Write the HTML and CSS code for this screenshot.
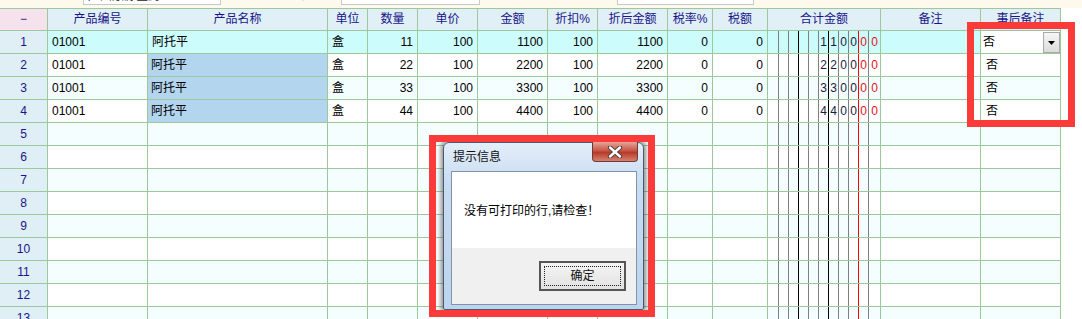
FILE: index.html
```html
<!DOCTYPE html>
<html lang="zh-CN">
<head>
  <meta charset="UTF-8" />
  <title>销售单</title>
  <link rel="stylesheet" href="styles.css">
</head>
<body>
  <div class="toolbar">
    <div class="bar-inner">
      <span class="lbl w83">客户名称</span>
      <span class="field w138">广州康源医药</span>
      <span class="lbl w120">单据编号</span>
      <span class="field w139">XS2016</span>
      <span class="lbl w137">制单日期</span>
      <span class="field w137">2016-06</span>
      <span class="lbl blue w116">合计金额</span>
      <span class="lbl blue w98">元</span>
    </div>
  </div>

  <div class="grid">
    <div class="row head">
      <div class="c corner">−</div>
      <div class="c">产品编号</div>
      <div class="c">产品名称</div>
      <div class="c">单位</div>
      <div class="c">数量</div>
      <div class="c">单价</div>
      <div class="c">金额</div>
      <div class="c">折扣%</div>
      <div class="c">折后金额</div>
      <div class="c">税率%</div>
      <div class="c">税额</div>
      <div class="c">合计金额</div>
      <div class="c">备注</div>
      <div class="c">事后备注</div>
    </div>

    <div class="row sel">
      <div class="c no">1</div>
      <div class="c">01001</div>
      <div class="c">阿托平</div>
      <div class="c">盒</div>
      <div class="c r">11</div>
      <div class="c r">100</div>
      <div class="c r">1100</div>
      <div class="c r">100</div>
      <div class="c r">1100</div>
      <div class="c r">0</div>
      <div class="c r">0</div>
      <div class="c sum"><i></i><i></i><i></i><i></i><i></i><i>1</i><i>1</i><i>0</i><i>0</i><i class="red">0</i><i class="red">0</i></div>
      <div class="c"></div>
      <div class="c combo"><span class="combo-text">否</span><span class="combo-btn"><svg width="7" height="4" viewBox="0 0 7 4"><path d="M0 0h7L3.5 4z" fill="#000"/></svg></span></div>
    </div>

    <div class="row">
      <div class="c no">2</div>
      <div class="c">01001</div>
      <div class="c pick">阿托平</div>
      <div class="c">盒</div>
      <div class="c r">22</div>
      <div class="c r">100</div>
      <div class="c r">2200</div>
      <div class="c r">100</div>
      <div class="c r">2200</div>
      <div class="c r">0</div>
      <div class="c r">0</div>
      <div class="c sum"><i></i><i></i><i></i><i></i><i></i><i>2</i><i>2</i><i>0</i><i>0</i><i class="red">0</i><i class="red">0</i></div>
      <div class="c"></div>
      <div class="c note">否</div>
    </div>

    <div class="row odd">
      <div class="c no">3</div>
      <div class="c">01001</div>
      <div class="c pick">阿托平</div>
      <div class="c">盒</div>
      <div class="c r">33</div>
      <div class="c r">100</div>
      <div class="c r">3300</div>
      <div class="c r">100</div>
      <div class="c r">3300</div>
      <div class="c r">0</div>
      <div class="c r">0</div>
      <div class="c sum"><i></i><i></i><i></i><i></i><i></i><i>3</i><i>3</i><i>0</i><i>0</i><i class="red">0</i><i class="red">0</i></div>
      <div class="c"></div>
      <div class="c note">否</div>
    </div>

    <div class="row">
      <div class="c no">4</div>
      <div class="c">01001</div>
      <div class="c pick">阿托平</div>
      <div class="c">盒</div>
      <div class="c r">44</div>
      <div class="c r">100</div>
      <div class="c r">4400</div>
      <div class="c r">100</div>
      <div class="c r">4400</div>
      <div class="c r">0</div>
      <div class="c r">0</div>
      <div class="c sum"><i></i><i></i><i></i><i></i><i></i><i>4</i><i>4</i><i>0</i><i>0</i><i class="red">0</i><i class="red">0</i></div>
      <div class="c"></div>
      <div class="c note">否</div>
    </div>

    <div class="row odd"><div class="c no">5</div><div class="c"></div><div class="c"></div><div class="c"></div><div class="c"></div><div class="c"></div><div class="c"></div><div class="c"></div><div class="c"></div><div class="c"></div><div class="c"></div><div class="c sum"><i></i><i></i><i></i><i></i><i></i><i></i><i></i><i></i><i></i><i></i><i></i></div><div class="c"></div><div class="c"></div></div>
    <div class="row"><div class="c no">6</div><div class="c"></div><div class="c"></div><div class="c"></div><div class="c"></div><div class="c"></div><div class="c"></div><div class="c"></div><div class="c"></div><div class="c"></div><div class="c"></div><div class="c sum"><i></i><i></i><i></i><i></i><i></i><i></i><i></i><i></i><i></i><i></i><i></i></div><div class="c"></div><div class="c"></div></div>
    <div class="row odd"><div class="c no">7</div><div class="c"></div><div class="c"></div><div class="c"></div><div class="c"></div><div class="c"></div><div class="c"></div><div class="c"></div><div class="c"></div><div class="c"></div><div class="c"></div><div class="c sum"><i></i><i></i><i></i><i></i><i></i><i></i><i></i><i></i><i></i><i></i><i></i></div><div class="c"></div><div class="c"></div></div>
    <div class="row"><div class="c no">8</div><div class="c"></div><div class="c"></div><div class="c"></div><div class="c"></div><div class="c"></div><div class="c"></div><div class="c"></div><div class="c"></div><div class="c"></div><div class="c"></div><div class="c sum"><i></i><i></i><i></i><i></i><i></i><i></i><i></i><i></i><i></i><i></i><i></i></div><div class="c"></div><div class="c"></div></div>
    <div class="row odd"><div class="c no">9</div><div class="c"></div><div class="c"></div><div class="c"></div><div class="c"></div><div class="c"></div><div class="c"></div><div class="c"></div><div class="c"></div><div class="c"></div><div class="c"></div><div class="c sum"><i></i><i></i><i></i><i></i><i></i><i></i><i></i><i></i><i></i><i></i><i></i></div><div class="c"></div><div class="c"></div></div>
    <div class="row"><div class="c no">10</div><div class="c"></div><div class="c"></div><div class="c"></div><div class="c"></div><div class="c"></div><div class="c"></div><div class="c"></div><div class="c"></div><div class="c"></div><div class="c"></div><div class="c sum"><i></i><i></i><i></i><i></i><i></i><i></i><i></i><i></i><i></i><i></i><i></i></div><div class="c"></div><div class="c"></div></div>
    <div class="row odd"><div class="c no">11</div><div class="c"></div><div class="c"></div><div class="c"></div><div class="c"></div><div class="c"></div><div class="c"></div><div class="c"></div><div class="c"></div><div class="c"></div><div class="c"></div><div class="c sum"><i></i><i></i><i></i><i></i><i></i><i></i><i></i><i></i><i></i><i></i><i></i></div><div class="c"></div><div class="c"></div></div>
    <div class="row"><div class="c no">12</div><div class="c"></div><div class="c"></div><div class="c"></div><div class="c"></div><div class="c"></div><div class="c"></div><div class="c"></div><div class="c"></div><div class="c"></div><div class="c"></div><div class="c sum"><i></i><i></i><i></i><i></i><i></i><i></i><i></i><i></i><i></i><i></i><i></i></div><div class="c"></div><div class="c"></div></div>
    <div class="row odd"><div class="c no">13</div><div class="c"></div><div class="c"></div><div class="c"></div><div class="c"></div><div class="c"></div><div class="c"></div><div class="c"></div><div class="c"></div><div class="c"></div><div class="c"></div><div class="c sum"><i></i><i></i><i></i><i></i><i></i><i></i><i></i><i></i><i></i><i></i><i></i></div><div class="c"></div><div class="c"></div></div>
  </div>

  <!-- message box over the grid -->
  <div class="mark mark-dialog"></div>
  <div class="dialog">
    <div class="dialog-title">提示信息</div>
    <div class="dialog-close">
      <svg width="16" height="12" viewBox="0 0 16 12">
        <path d="M3 1.5l10 9M13 1.5l-10 9" stroke="#3a3a3a" stroke-width="4.2" stroke-linecap="round"/>
        <path d="M3 1.5l10 9M13 1.5l-10 9" stroke="#fff" stroke-width="2.4" stroke-linecap="round"/>
      </svg>
    </div>
    <div class="dialog-body">
      <div class="dialog-msg">没有可打印的行,请检查！</div>
      <div class="dialog-foot">
        <div class="btn"><span class="btn-focus">确定</span></div>
      </div>
    </div>
  </div>

  <div class="mark mark-note"></div>
</body>
</html>
```

FILE: styles.css
```css
body {
  margin: 0;
  width: 1082px;
  height: 319px;
  overflow: hidden;
  background-color: #fff;
  font-family: "Liberation Sans", "Noto Sans CJK SC", sans-serif;
  font-size: 12px;
  color: #000;
  position: relative;
}

/* top bar, mostly scrolled out of view */
.toolbar {
  height: 8px;
  overflow: hidden;
  background-color: #fdf9ec;
}

.bar-inner {
  display: flex;
  margin-top: -15px;
  height: 21px;
}

.lbl {
  line-height: 20px;
  text-align: right;
  padding-right: 8px;
  box-sizing: border-box;
  color: #222;
}

.lbl.blue {
  color: #1a1aa0;
}

.field {
  height: 20px;
  line-height: 20px;
  background-color: #fff;
  border: 1px solid #c8c8c8;
  box-sizing: border-box;
  padding-left: 4px;
  color: #222;
}

.w83 { width: 83px; }
.w98 { width: 98px; }
.w116 { width: 142px; }
.w120 { width: 120px; }
.w137 { width: 137px; }
.w138 { width: 138px; }
.w139 { width: 139px; }

/* grid */
.grid {
  width: 1061px;
  border-top: 1px solid #9cc99c;
}

.row {
  display: grid;
  grid-template-columns: 48px 100px 180px 40px 50px 60px 70px 50px 70px 45px 55px 113px 100px 80px;
  height: 23px;
  box-sizing: border-box;
  border-bottom: 1px solid #9cc99c;
  background-color: #fff;
}

.row.odd {
  background-color: #f4fdff;
}

.row.sel {
  background-color: #ccfcfc;
}

.row.head {
  height: 22px;
  background-color: #e1eff6;
  color: #16168a;
}

.c {
  box-sizing: border-box;
  border-right: 1px solid #9cc99c;
  padding: 0 4px;
  line-height: 22px;
  white-space: nowrap;
  overflow: hidden;
}

.head .c {
  text-align: center;
  padding: 0;
  line-height: 21px;
}

.head .corner {
  background-color: #f5e2ec;
}

.c.no {
  background-color: #e0eef6;
  color: #16168a;
  text-align: center;
  padding: 0;
}

.c.r {
  text-align: right;
}

.c.pick {
  background-color: #b3d6ee;
  padding-left: 3px;
}

.c.note {
  padding-left: 5px;
}

/* digit columns in the total amount */
.c.sum {
  display: flex;
  padding: 0;
}

.sum i {
  font-style: normal;
  width: 10px;
  flex: none;
  box-sizing: border-box;
  border-right: 1px solid #808080;
  text-align: center;
  color: #1b1b3a;
}

.sum i:first-child {
  width: 11px;
}

.sum i:nth-child(3),
.sum i:nth-child(6) {
  border-right-color: #000;
}

.sum i:nth-child(9) {
  border-right-color: #ff0000;
}

.sum i:last-child {
  width: 11px;
  border-right: none;
}

.sum i.red {
  color: #e8101a;
}

/* combo box in the last column */
.c.combo {
  display: flex;
  background-color: #fff;
  padding: 0 0 0 2px;
}

.combo-text {
  flex: 1;
}

.combo-btn {
  width: 17px;
  height: 21px;
  margin-top: 1px;
  box-sizing: border-box;
  border: 1px solid #a9a9a9;
  background: linear-gradient(#f6f6f6, #dcdcdc);
  display: flex;
  align-items: center;
  justify-content: center;
}

/* red highlight frames */
.mark {
  position: absolute;
  box-sizing: border-box;
  border: 7px solid #fb3a3a;
  z-index: 3;
}

.mark-dialog {
  left: 429px;
  top: 135px;
  width: 226px;
  height: 182px;
}

.mark-note {
  left: 967px;
  top: 22px;
  width: 108px;
  height: 105px;
}

/* message box */
.dialog {
  position: absolute;
  left: 443px;
  top: 142px;
  width: 201px;
  height: 168px;
  box-sizing: border-box;
  padding: 0 6px 5px 7px;
  border: 1px solid #4b5a6c;
  border-radius: 6px 6px 2px 2px;
  background: linear-gradient(#e4eefa, #c8dcf2 40px, #bcd4ee);
  box-shadow: 0 0 5px 2px rgba(40, 40, 40, 0.55);
  z-index: 2;
}

.dialog-title {
  height: 28px;
  line-height: 28px;
  padding-left: 2px;
  color: #111;
}

.dialog-close {
  position: absolute;
  left: 148px;
  top: -1px;
  width: 46px;
  height: 20px;
  box-sizing: border-box;
  border: 1px solid #6e3a36;
  border-top: none;
  border-radius: 0 0 4px 4px;
  background: linear-gradient(#e3a69b, #c95646 45%, #b73a2a 55%, #d6826f);
  display: flex;
  align-items: center;
  justify-content: center;
}

.dialog-body {
  height: 134px;
  box-sizing: border-box;
  border: 1px solid #8193a8;
  background-color: #f0f0f0;
  display: flex;
  flex-direction: column;
}

.dialog-msg {
  height: 76px;
  box-sizing: border-box;
  padding: 30px 0 0 12px;
  line-height: 18px;
  background-color: #fff;
}

.dialog-foot {
  display: flex;
  justify-content: flex-end;
  padding: 13px 10px 0 0;
}

.btn {
  width: 87px;
  height: 30px;
  box-sizing: border-box;
  border: 2px solid #555;
  background: linear-gradient(#f4f4f4, #e2e2e2);
  padding: 3px;
}

.btn-focus {
  display: block;
  height: 100%;
  box-sizing: border-box;
  border: 1px dotted #222;
  text-align: center;
  line-height: 18px;
  color: #111;
}
```
